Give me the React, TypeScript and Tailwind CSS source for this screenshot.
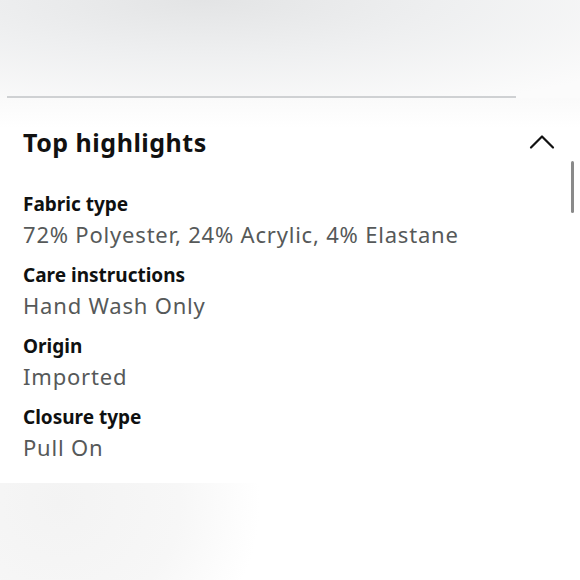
const highlights = [
  { label: 'Fabric type', value: '72% Polyester, 24% Acrylic, 4% Elastane' },
  { label: 'Care instructions', value: 'Hand Wash Only' },
  { label: 'Origin', value: 'Imported' },
  { label: 'Closure type', value: 'Pull On' },
];

function ChevronUp() {
  return (
    <svg width="26" height="16" viewBox="0 0 26 16" fill="none">
      <path d="M2 13.5 L13 2.5 L24 13.5" stroke="#111" strokeWidth="2.2" strokeLinecap="round" strokeLinejoin="round" />
    </svg>
  );
}

export default function App() {
  return (
    <div className="w-[580px] h-[580px] overflow-hidden bg-white flex flex-col font-['Noto_Sans',sans-serif]">
      {/* faded area above */}
      <div className="h-[98px] shrink-0 flex flex-col justify-end bg-[radial-gradient(ellipse_90%_120%_at_35%_0%,#e3e4e5_0%,#eeeff0_45%,#fbfbfb_100%)]">
        <div className="ml-[7px] w-[509px] h-[2px] bg-[#cfd1d3]" />
      </div>

      {/* card */}
      <div className="h-[385px] shrink-0 relative bg-[linear-gradient(#fafafa,#ffffff_30px)] px-[23px]">
        <div className="flex items-center justify-between pt-[28px]">
          <h2 className="text-[25px] leading-[32px] font-bold text-[#111] tracking-[0.5px]">Top highlights</h2>
          <div className="mr-[2px] mt-[-1px]">
            <ChevronUp />
          </div>
        </div>

        <div className="mt-[32px] flex flex-col gap-[11px]">
          {highlights.map((h) => (
            <div key={h.label} className="flex flex-col">
              <span className="text-[19px] leading-[28px] font-bold text-[#0f1111]">{h.label}</span>
              <span className="text-[22px] leading-[32px] text-[#565959] tracking-[0.8px]">{h.value}</span>
            </div>
          ))}
        </div>

        {/* scrollbar thumb */}
        <div className="absolute right-[6px] top-[63px] w-[3px] h-[52px] rounded-full bg-[#8a8a8a]" />
      </div>

      {/* faded area below */}
      <div className="flex-1 bg-[radial-gradient(ellipse_200px_190px_at_60px_20px,#f3f3f3_0%,#f7f7f7_60%,#ffffff_100%)]" />
    </div>
  );
}
